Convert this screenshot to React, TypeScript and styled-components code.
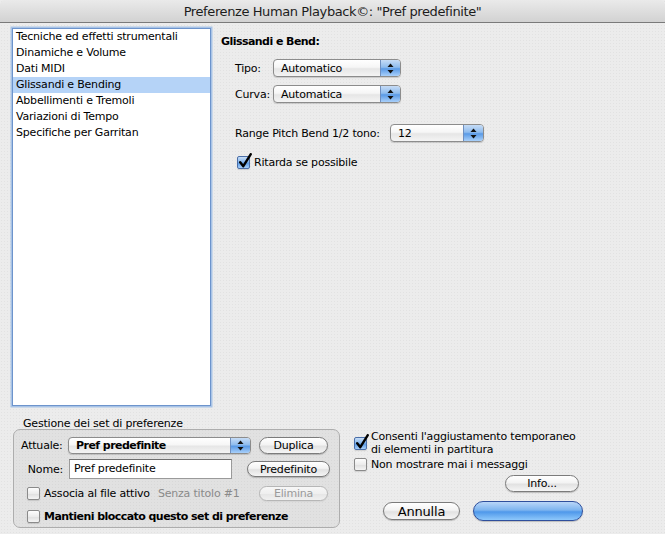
import React from "react";
import styled, { createGlobalStyle, css } from "styled-components";

const Global = createGlobalStyle`
  html, body { margin: 0; padding: 0; }
  body {
    width: 665px; height: 534px; overflow: hidden;
    background: #ececec;
    font-family: "DejaVu Sans", "Noto Sans", sans-serif;
    letter-spacing: -0.2px;
    color: #000;
  }
`;

const Window = styled.div`
  width: 665px;
  height: 534px;
  display: flex;
  flex-direction: column;
  background-color: #ececec;
  background-image: radial-gradient(#e2e2e2 0.6px, transparent 0.8px);
  background-size: 3px 3px;
`;

const TitleBar = styled.div`
  flex: none;
  height: 22px;
  border-bottom: 1px solid #7a7a7a;
  border-radius: 5px 5px 0 0;
  background: linear-gradient(#eaeaea, #d2d2d2);
  display: flex;
  align-items: center;
  justify-content: center;
  font-size: 13px;
  letter-spacing: -0.4px;
  color: #1c1c1c;
`;

const Body = styled.div`
  padding: 4px 0 0 11px;
  display: flex;
  flex-direction: column;
`;

const TopRow = styled.div`
  display: flex;
  height: 380px;
`;

const ListBox = styled.div`
  margin: 2px;
  width: 197px;
  height: 376px;
  background: #fff;
  box-shadow: 0 0 0 1px #6d94cc, 0 0 0 2.5px #a8c3e6;
  font-size: 11px;
`;

const ListItem = styled.div<{ $selected?: boolean }>`
  height: 16px;
  line-height: 16px;
  padding-left: 3px;
  white-space: nowrap;
  background: ${(p) => (p.$selected ? "#b5d3f7" : "transparent")};
`;

const Panel = styled.div`
  padding: 7px 0 0 9px;
  display: flex;
  flex-direction: column;
  font-size: 11px;
`;

const Heading = styled.div`
  font-weight: bold;
  letter-spacing: -0.55px;
  height: 16px;
  line-height: 16px;
`;

const FieldRow = styled.div<{ $top: number }>`
  display: flex;
  align-items: center;
  padding-left: 14px;
  margin-top: ${(p) => p.$top}px;
`;

const Label = styled.span<{ $w?: number; $right?: boolean; $bold?: boolean; $dim?: boolean }>`
  flex: none;
  ${(p) => p.$w !== undefined && css`width: ${p.$w}px;`}
  ${(p) => p.$right && css`text-align: right; padding-right: 6px; box-sizing: border-box;`}
  font-weight: ${(p) => (p.$bold ? "bold" : "normal")};
  letter-spacing: ${(p) => (p.$bold ? "-0.55px" : "-0.2px")};
  color: ${(p) => (p.$dim ? "#8a8a8a" : "#000")};
  white-space: nowrap;
`;

const PopupWrap = styled.div<{ $w: number; $h?: number }>`
  flex: none;
  width: ${(p) => p.$w}px;
  height: ${(p) => p.$h ?? 18}px;
  box-sizing: border-box;
  border: 1px solid #8c8c8c;
  border-radius: 4px;
  background: linear-gradient(#ffffff 0%, #f6f6f6 45%, #e6e6e6 55%, #f4f4f4 100%);
  box-shadow: 0 1px 1px rgba(0, 0, 0, 0.15);
  display: flex;
  align-items: center;
  overflow: hidden;
`;

const PopupText = styled.span<{ $bold?: boolean }>`
  flex: 1;
  padding-left: 7px;
  font-weight: ${(p) => (p.$bold ? "bold" : "normal")};
  letter-spacing: ${(p) => (p.$bold ? "-0.55px" : "-0.2px")};
  white-space: nowrap;
`;

const Stepper = styled.span`
  flex: none;
  width: 19px;
  align-self: stretch;
  border-left: 1px solid #6f8fbf;
  background: linear-gradient(#c6dcf6 0%, #8fbcee 45%, #5a9ae6 55%, #a9d0fa 100%);
  display: flex;
  align-items: center;
  justify-content: center;
`;

const Arrows = () => (
  <svg width="7" height="11" viewBox="0 0 7 11">
    <path d="M3.5 0.5 L6.5 4 L0.5 4 Z" fill="#111" />
    <path d="M3.5 10.5 L6.5 7 L0.5 7 Z" fill="#111" />
  </svg>
);

const Popup = ({ w, h, text, bold }: { w: number; h?: number; text: string; bold?: boolean }) => (
  <PopupWrap $w={w} $h={h}>
    <PopupText $bold={bold}>{text}</PopupText>
    <Stepper>
      <Arrows />
    </Stepper>
  </PopupWrap>
);

const CheckRow = styled.label<{ $top?: number; $left?: number }>`
  display: flex;
  align-items: center;
  gap: 4px;
  margin-top: ${(p) => p.$top ?? 0}px;
  padding-left: ${(p) => p.$left ?? 0}px;
  white-space: nowrap;
`;

const Box = styled.span<{ $checked?: boolean }>`
  position: relative;
  flex: none;
  width: 13px;
  height: 13px;
  box-sizing: border-box;
  border: 1px solid ${(p) => (p.$checked ? "#4a6ea8" : "#8a8a8a")};
  border-radius: 2px;
  background: ${(p) =>
    p.$checked
      ? "linear-gradient(#c8def7 0%, #86b6ec 45%, #5b9be6 55%, #a7cff9 100%)"
      : "linear-gradient(#fdfdfd 0%, #ececec 50%, #e0e0e0 55%, #f4f4f4 100%)"};
  box-shadow: 0 1px 1px rgba(0, 0, 0, 0.12);
`;

const Tick = styled.svg`
  position: absolute;
  left: 0px;
  top: -4px;
`;

const Check = ({ checked }: { checked?: boolean }) => (
  <Box $checked={checked}>
    {checked && (
      <Tick width="15" height="16" viewBox="0 0 15 16">
        <path d="M2.2 9.2 L5.3 13.2 L12.8 1.2" fill="none" stroke="#000" strokeWidth="2.4" strokeLinecap="round" strokeLinejoin="round" />
      </Tick>
    )}
  </Box>
);

const Button = styled.button<{ $w: number; $h?: number; $fs?: number; $disabled?: boolean; $default?: boolean }>`
  flex: none;
  width: ${(p) => p.$w}px;
  height: ${(p) => p.$h ?? 17}px;
  padding: 0;
  box-sizing: border-box;
  border-radius: ${(p) => ((p.$h ?? 17) / 2)}px;
  font-family: inherit;
  letter-spacing: -0.2px;
  font-size: ${(p) => p.$fs ?? 11}px;
  color: ${(p) => (p.$disabled ? "#9a9a9a" : "#000")};
  border: 1px solid ${(p) => (p.$disabled ? "#b6b6b6" : p.$default ? "#2f4f9c" : "#7b7b7b")};
  background: ${(p) =>
    p.$default
      ? "linear-gradient(#b9d6f8 0%, #7db4ef 45%, #4f98ea 55%, #8ec8fb 100%)"
      : p.$disabled
      ? "linear-gradient(#f7f7f7 0%, #efefef 50%, #e6e6e6 55%, #f0f0f0 100%)"
      : "linear-gradient(#ffffff 0%, #f3f3f3 45%, #e2e2e2 55%, #f5f5f5 100%)"};
  box-shadow: 0 1px 1px rgba(0, 0, 0, ${(p) => (p.$disabled ? 0.05 : 0.2)});
  display: flex;
  align-items: center;
  justify-content: center;
`;

const BottomRow = styled.div`
  display: flex;
  padding-left: 2px;
  font-size: 11px;
`;

const LeftCol = styled.div`
  width: 327px;
  display: flex;
  flex-direction: column;
`;

const GroupTitle = styled.div`
  height: 22px;
  box-sizing: border-box;
  padding: 10px 0 0 10px;
  line-height: 13px;
`;

const Group = styled.div`
  width: 327px;
  height: 99px;
  box-sizing: border-box;
  border: 1px solid #adadad;
  border-radius: 7px;
  background: rgba(0, 0, 0, 0.045);
  padding: 7px 11px 0 0;
  display: flex;
  flex-direction: column;
`;

const GroupRow = styled.div<{ $top?: number; $h: number }>`
  display: flex;
  align-items: center;
  height: ${(p) => p.$h}px;
  margin-top: ${(p) => p.$top ?? 0}px;
  padding-left: 7px;
`;

const TextField = styled.div<{ $w: number }>`
  flex: none;
  width: ${(p) => p.$w}px;
  height: 20px;
  box-sizing: border-box;
  border: 1px solid #9a9a9a;
  border-top-color: #6f6f6f;
  background: #fff;
  padding-left: 4px;
  line-height: 18px;
`;

const Spacer = styled.span<{ $w?: number; $grow?: boolean }>`
  flex: ${(p) => (p.$grow ? "1" : "none")};
  width: ${(p) => p.$w ?? 0}px;
`;

const RightCol = styled.div`
  margin-left: 14px;
  width: 231px;
  padding-top: 23px;
  display: flex;
  flex-direction: column;
`;

const Wrap = styled.span`
  line-height: 13px;
  white-space: normal;
`;

const InfoRow = styled.div`
  display: flex;
  margin-top: 4px;
  padding-left: 151px;
`;

const ActionRow = styled.div`
  display: flex;
  align-items: center;
  margin-top: 9px;
  padding-left: 29px;
  gap: 13px;
`;

const items = [
  "Tecniche ed effetti strumentali",
  "Dinamiche e Volume",
  "Dati MIDI",
  "Glissandi e Bending",
  "Abbellimenti e Tremoli",
  "Variazioni di Tempo",
  "Specifiche per Garritan",
];

export default function App() {
  return (
    <Window>
      <Global />
      <TitleBar>Preferenze Human Playback©: "Pref predefinite"</TitleBar>
      <Body>
        <TopRow>
          <ListBox>
            {items.map((t, i) => (
              <ListItem key={t} $selected={i === 3}>
                {t}
              </ListItem>
            ))}
          </ListBox>
          <Panel>
            <Heading>Glissandi e Bend:</Heading>
            <FieldRow $top={9}>
              <Label $w={38}>Tipo:</Label>
              <Popup w={128} text="Automatico" />
            </FieldRow>
            <FieldRow $top={8}>
              <Label $w={38}>Curva:</Label>
              <Popup w={128} text="Automatica" />
            </FieldRow>
            <FieldRow $top={21}>
              <Label $w={155}>Range Pitch Bend 1/2 tono:</Label>
              <Popup w={94} text="12" />
            </FieldRow>
            <CheckRow $top={14} $left={16}>
              <Check checked />
              <span>Ritarda se possibile</span>
            </CheckRow>
          </Panel>
        </TopRow>
        <BottomRow>
          <LeftCol>
            <GroupTitle>Gestione dei set di preferenze</GroupTitle>
            <Group>
              <GroupRow $h={17}>
                <Label $w={47}>Attuale:</Label>
                <Popup w={183} h={17} text="Pref predefinite" bold />
                <Spacer $w={8} />
                <Button $w={69}>Duplica</Button>
              </GroupRow>
              <GroupRow $h={20} $top={5}>
                <Label $w={48} $right>
                  Nome:
                </Label>
                <TextField $w={163}>Pref predefinite</TextField>
                <Spacer $w={15} />
                <Button $w={83} $h={16}>
                  Predefinito
                </Button>
              </GroupRow>
              <GroupRow $h={15} $top={7}>
                <CheckRow $left={6}>
                  <Check />
                  <span>Associa al file attivo</span>
                </CheckRow>
                <Spacer $w={8} />
                <Label $dim>Senza titolo #1</Label>
                <Spacer $grow />
                <Button $w={69} $h={15} $disabled>
                  Elimina
                </Button>
              </GroupRow>
              <GroupRow $h={15} $top={8}>
                <CheckRow $left={6}>
                  <Check />
                  <Label $bold>Mantieni bloccato questo set di preferenze</Label>
                </CheckRow>
              </GroupRow>
            </Group>
          </LeftCol>
          <RightCol>
            <CheckRow>
              <Check checked />
              <Wrap>
                Consenti l'aggiustamento temporaneo
                <br />
                di elementi in partitura
              </Wrap>
            </CheckRow>
            <CheckRow $top={2}>
              <Check />
              <span>Non mostrare mai i messaggi</span>
            </CheckRow>
            <InfoRow>
              <Button $w={74}>Info...</Button>
            </InfoRow>
            <ActionRow>
              <Button $w={77} $h={18} $fs={13}>
                Annulla
              </Button>
              <Button $w={110} $h={20} $default />
            </ActionRow>
          </RightCol>
        </BottomRow>
      </Body>
    </Window>
  );
}
